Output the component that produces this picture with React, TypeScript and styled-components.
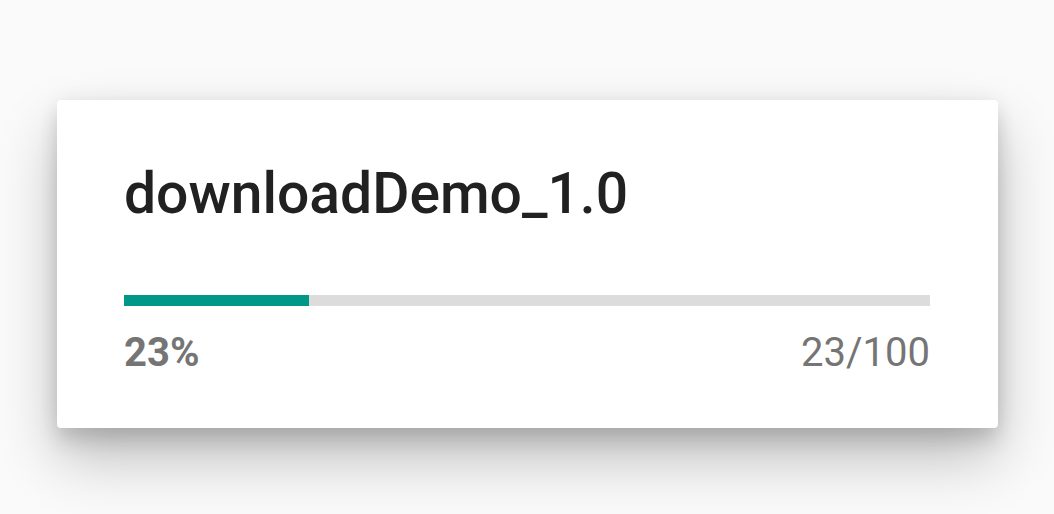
import React from "react";
import styled, { createGlobalStyle } from "styled-components";

const GlobalStyle = createGlobalStyle`
  html, body {
    margin: 0;
    padding: 0;
    background: #fafafa;
  }
  body {
    font-family: Roboto, "Liberation Sans", sans-serif;
  }
`;

const App = () => {
  const done = 23;
  const total = 100;
  const percent = Math.round((done / total) * 100);

  return (
    <Page>
      <GlobalStyle />
      <Card>
        <Title>downloadDemo_1.0</Title>
        <Track>
          <Fill style={{ width: `${percent}%` }} />
        </Track>
        <Labels>
          <Percent>{percent}%</Percent>
          <Count>
            {done}/{total}
          </Count>
        </Labels>
      </Card>
    </Page>
  );
};

export default App;

// ****  STYLED COMPONENTS  ****

const Page = styled.div`
  width: 1054px;
  height: 514px;
  box-sizing: border-box;
  padding: 100px 56px 0 57px;
  background: #fafafa;
  overflow: hidden;
`;

const Card = styled.div`
  display: flex;
  flex-direction: column;
  box-sizing: border-box;
  height: 328px;
  padding: 65px 68px 0 67px;
  background: #fff;
  border-radius: 4px;
  box-shadow: 0 30px 60px rgba(0, 0, 0, 0.24), 0 14px 20px rgba(0, 0, 0, 0.12),
    0 0 20px rgba(0, 0, 0, 0.06);
`;

const Title = styled.h1`
  margin: 0;
  font: 500 57px/57px Roboto, "Liberation Sans", sans-serif;
  color: #212121;
`;

const Track = styled.div`
  margin-top: 73px;
  height: 11px;
  background: #dcdcdc;
`;

const Fill = styled.div`
  height: 100%;
  background: #009688;
`;

const Labels = styled.div`
  display: flex;
  justify-content: space-between;
  margin-top: 27px;
  font-size: 40px;
  line-height: 40px;
  color: #757575;
`;

const Percent = styled.span`
  font-weight: 700;
`;

const Count = styled.span`
  font-weight: 400;
`;
